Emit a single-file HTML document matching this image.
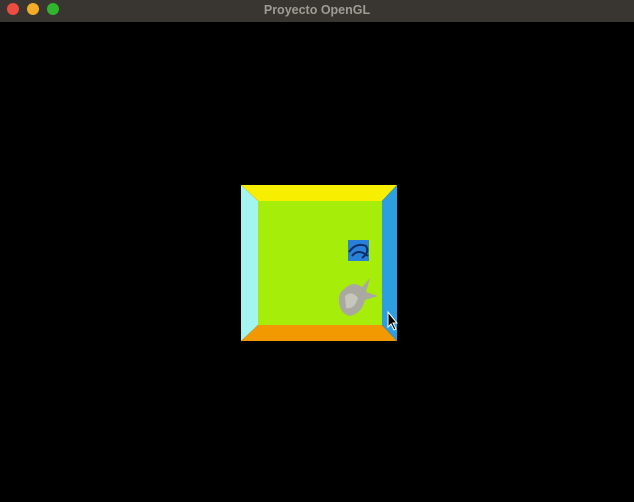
<!DOCTYPE html>
<html><head><meta charset="utf-8"><style>
html,body{margin:0;padding:0;background:#000;width:634px;height:502px;overflow:hidden}
</style></head><body>
<svg width="634" height="502" xmlns="http://www.w3.org/2000/svg" style="display:block">
<rect width="634" height="502" fill="#000"/>
<rect width="634" height="22" fill="#393530"/>
<circle cx="13" cy="9" r="6" fill="#ed4c40"/>
<circle cx="33" cy="9" r="6" fill="#f4ad28"/>
<circle cx="53" cy="9" r="6" fill="#30b52c"/>
<text x="317" y="14" text-anchor="middle" font-family="Liberation Sans, sans-serif" font-weight="bold" font-size="12.5" fill="#9e9a94">Proyecto OpenGL</text>
<!-- box -->
<polygon points="241,185 397,185 382,201 258,201" fill="#f8ee00"/>
<polygon points="241,341 397,341 382,325 258,325" fill="#f29800"/>
<polygon points="241,185 258,201 258,325 241,341" fill="#a4f4f0"/>
<polygon points="397,185 382,201 382,325 397,341" fill="#2d9ee0"/>
<rect x="258" y="201" width="124" height="124" fill="#a6ee0a"/>
<!-- blue texture -->
<rect x="348" y="240" width="21" height="21" fill="#2a7fd8"/>
<path d="M349,252 Q356,242 366,246 Q370,252 362,258 M352,256 Q358,248 368,256" stroke="#0d2f66" stroke-width="2" fill="none"/>
<!-- blob -->
<path d="M343,290 Q352,280 362,287 L370,278 L366,292 L378,296 L365,300 Q362,313 350,316 Q340,314 339,302 Q338,294 343,290Z" fill="#a9a9a0"/>
<path d="M345,296 Q352,290 358,298 Q354,310 346,308Z" fill="#c6c6bc"/>
<!-- cursor -->
<path d="M388,312 L388,327 L391,324 L394,330 L396,329 L393,323 L397,323 Z" fill="#000" stroke="#fff" stroke-width="1"/>
</svg>
</body></html>
